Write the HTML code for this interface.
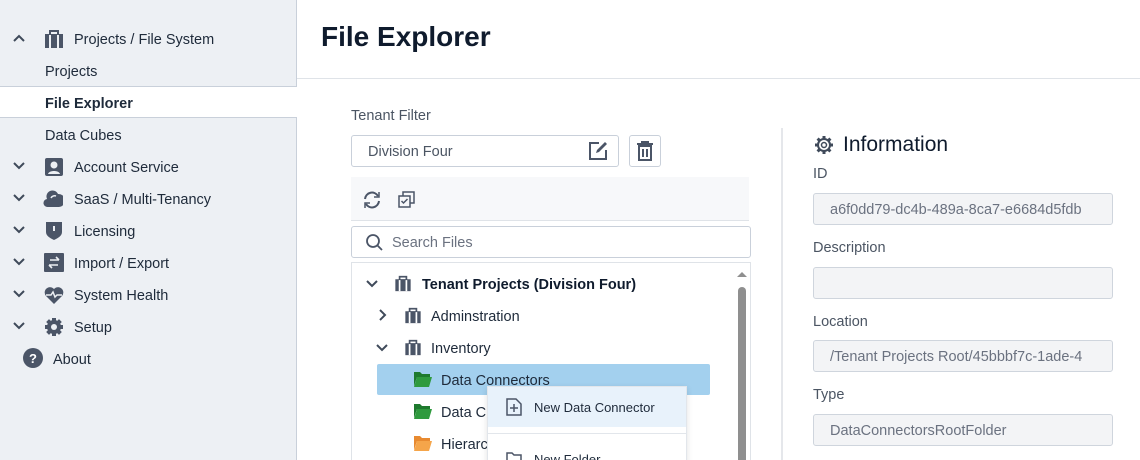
<!DOCTYPE html><html><head><style>
*{margin:0;padding:0;box-sizing:border-box}
html,body{overflow:hidden}
body{width:1140px;height:460px;overflow:hidden;background:#fff;font-family:"Liberation Sans",sans-serif;color:#1f2937;position:relative}
.a{position:absolute}
.sb{left:0;top:0;width:297px;height:460px;background:#edf0f4;border-right:1px solid #c9d0da}
.it{position:absolute;font-size:14.5px;color:#1e2a3a;transform:translateY(1px)}
.ic{position:absolute;width:20px;height:20px}
.lbl{font-size:14.5px;color:#4b5563;transform:translateY(1px)}
.inp{border:1px solid #cfd5dd;border-radius:3px;background:#f3f4f6;height:32px;font-size:14.5px;color:#6b7280;padding:8px 16px;white-space:nowrap;overflow:hidden;line-height:16px}
.t{position:absolute;font-size:14.5px;color:#1e2a3a;transform:translateY(1px)}
</style></head><body>
<div class="a sb"></div>
<div class="a" style="left:0;top:86px;width:297px;height:32px;background:#fff;border-top:1px solid #c9d0da;border-bottom:1px solid #c9d0da"></div>
<svg class="a" style="left:12px;top:33px" width="14" height="10" viewBox="0 0 14 10"><path d="M2 8L7 3L12 8" stroke="#3f4a5a" stroke-width="2" fill="none"/></svg>
<svg class="ic" style="left:44px;top:29px" viewBox="0 0 20 20"><rect x="1" y="5" width="18" height="14" fill="#4b5567"/><rect x="6" y="2" width="8" height="4" fill="none" stroke="#4b5567" stroke-width="2"/><rect x="5" y="6" width="2" height="13" fill="#edf0f4"/><rect x="13" y="6" width="2" height="13" fill="#edf0f4"/></svg>
<div class="it" style="left:74px;top:31px">Projects / File System</div>
<div class="it" style="left:45px;top:63px">Projects</div>
<div class="it" style="left:45px;top:95px;font-weight:bold">File Explorer</div>
<div class="it" style="left:45px;top:127px">Data Cubes</div>
<svg class="a" style="left:12px;top:161px" width="14" height="170"><g stroke="#3f4a5a" stroke-width="2" fill="none"><path d="M2 2L7 7L12 2"/><path d="M2 34L7 39L12 34"/><path d="M2 66L7 71L12 66"/><path d="M2 98L7 103L12 98"/><path d="M2 130L7 135L12 130"/><path d="M2 162L7 167L12 162"/></g></svg>
<svg class="ic" style="left:44px;top:157px" viewBox="0 0 20 20"><rect x="1" y="1" width="18" height="18" rx="2" fill="#4b5567"/><circle cx="10" cy="8" r="3.5" fill="#edf0f4"/><path d="M4 17c1-4 11-4 12 0z" fill="#edf0f4"/></svg>
<div class="it" style="left:74px;top:159px">Account Service</div>
<svg class="ic" style="left:43px;top:189px" viewBox="0 0 20 20"><path d="M5 18a4 4 0 0 1-1-8a6 6 0 0 1 11-5a5 5 0 0 1 1 13z" fill="#4b5567"/><path d="M8 9a4 4 0 0 1 5-2" stroke="#edf0f4" stroke-width="1.5" fill="none"/></svg>
<div class="it" style="left:74px;top:191px">SaaS / Multi-Tenancy</div>
<svg class="ic" style="left:44px;top:220px" viewBox="0 0 20 20"><path d="M2 2h16v10c0 4-4 6-8 8c-4-2-8-4-8-8z" fill="#4b5567"/><rect x="9" y="6" width="2" height="5" fill="#edf0f4"/></svg>
<div class="it" style="left:74px;top:223px">Licensing</div>
<svg class="ic" style="left:44px;top:253px" viewBox="0 0 20 20"><rect x="0" y="0" width="20" height="19" rx="1" fill="#4b5567"/><path d="M6 7h9M12 4l3 3M14 12H5M8 15l-3-3" stroke="#edf0f4" stroke-width="1.6" fill="none"/></svg>
<div class="it" style="left:74px;top:255px">Import / Export</div>
<svg class="ic" style="left:44px;top:285px" viewBox="0 0 20 20"><path d="M10 19L2 11a5 5 0 0 1 8-7a5 5 0 0 1 8 7z" fill="#4b5567"/><path d="M2 10h5l2-3 2 5 2-2h5" stroke="#edf0f4" stroke-width="1.5" fill="none"/></svg>
<div class="it" style="left:74px;top:287px">System Health</div>
<svg class="ic" style="left:44px;top:317px" viewBox="0 0 20 20"><circle cx="10" cy="10" r="7" fill="#4b5567"/><g stroke="#4b5567" stroke-width="4"><path d="M10 1v18M1 10h18M3.6 3.6l12.8 12.8M16.4 3.6L3.6 16.4"/></g><circle cx="10" cy="10" r="3" fill="#edf0f4"/></svg>
<div class="it" style="left:74px;top:319px">Setup</div>
<svg class="ic" style="left:23px;top:348px" viewBox="0 0 20 20"><circle cx="10" cy="10" r="10" fill="#4b5567"/><text x="10" y="15" font-size="13" font-weight="bold" text-anchor="middle" fill="#fff" font-family="Liberation Sans">?</text></svg>
<div class="it" style="left:53px;top:351px">About</div>

<div class="a" style="left:297px;top:78px;width:843px;height:1px;background:#dfe3e8"></div>
<div class="a" style="left:321px;top:21px;font-size:28px;font-weight:bold;color:#0f1b2d">File Explorer</div>

<div class="a lbl" style="left:351px;top:107px">Tenant Filter</div>
<div class="a" style="left:351px;top:135px;width:268px;height:32px;border:1px solid #c9d0da;border-radius:3px;font-size:14.5px;color:#4b5563;padding:8px 16px;line-height:16px">Division Four</div>
<svg class="a" style="left:588px;top:141px" width="20" height="20" viewBox="0 0 20 20"><path d="M11 2H2v16h16V9" stroke="#4b5567" stroke-width="2" fill="none"/><path d="M8 12l1-3 8-8 2 2-8 8z" fill="#4b5567"/></svg>
<div class="a" style="left:629px;top:135px;width:32px;height:32px;border:1px solid #c9d0da;border-radius:3px"></div>
<svg class="a" style="left:636px;top:141px" width="18" height="20" viewBox="0 0 18 20"><path d="M1 3h16M6 3V1h6v2" stroke="#4b5567" stroke-width="2" fill="none"/><rect x="3" y="5" width="12" height="14" stroke="#4b5567" stroke-width="2" fill="none"/><path d="M7 8v8M11 8v8" stroke="#4b5567" stroke-width="2"/></svg>
<div class="a" style="left:351px;top:177px;width:398px;height:44px;background:#f7f8fa;border-bottom:1px solid #dfe3e8"></div>
<svg class="a" style="left:362px;top:190px" width="20" height="20" viewBox="0 0 20 20"><path d="M16 6a7 7 0 0 0-13 3M4 14a7 7 0 0 0 13-3" stroke="#4b5567" stroke-width="2" fill="none"/><path d="M17 2v5h-5M3 18v-5h5" stroke="#4b5567" stroke-width="1.5" fill="none"/></svg>
<svg class="a" style="left:398px;top:191px" width="18" height="18" viewBox="0 0 18 18"><rect x="1" y="5" width="11" height="11" stroke="#4b5567" stroke-width="1.5" fill="none"/><path d="M5 5V1h11v11h-4" stroke="#4b5567" stroke-width="1.5" fill="none"/><path d="M3.5 10l2 2 4-4" stroke="#4b5567" stroke-width="1.5" fill="none"/></svg>
<div class="a" style="left:351px;top:226px;width:400px;height:32px;border:1px solid #c9d0da;border-radius:3px"></div>
<svg class="a" style="left:365px;top:233px" width="18" height="18" viewBox="0 0 18 18"><circle cx="8" cy="8" r="6" stroke="#4b5567" stroke-width="1.8" fill="none"/><path d="M12.5 12.5L17 17" stroke="#4b5567" stroke-width="1.8"/></svg>
<div class="a" style="left:392px;top:235px;font-size:14.5px;color:#6b7280">Search Files</div>
<div class="a" style="left:351px;top:262px;width:400px;height:200px;border:1px solid #dfe3e8;border-bottom:none"></div>
<div class="a" style="left:738px;top:287px;width:8px;height:180px;background:#8f8f8f;border-radius:4px"></div>
<svg class="a" style="left:737px;top:271px" width="10" height="6"><path d="M0 6L5 1L10 6z" fill="#8f8f8f"/></svg>

<svg class="a" style="left:366px;top:279px" width="12" height="10"><path d="M1 2L6 7L11 2" stroke="#3f4a5a" stroke-width="2" fill="none"/></svg>
<svg class="a" style="left:394px;top:275px" width="18" height="17" viewBox="0 0 20 20"><rect x="1" y="5" width="18" height="14" fill="#4b5567"/><rect x="6" y="2" width="8" height="4" fill="none" stroke="#4b5567" stroke-width="2"/><rect x="5" y="6" width="2" height="13" fill="#fff"/><rect x="13" y="6" width="2" height="13" fill="#fff"/></svg>
<div class="t" style="left:422px;top:276px;font-weight:bold;color:#0f1b2d">Tenant Projects (Division Four)</div>
<svg class="a" style="left:378px;top:309px" width="10" height="12"><path d="M2 1L7 6L2 11" stroke="#3f4a5a" stroke-width="2" fill="none"/></svg>
<svg class="a" style="left:404px;top:307px" width="18" height="17" viewBox="0 0 20 20"><rect x="1" y="5" width="18" height="14" fill="#4b5567"/><rect x="6" y="2" width="8" height="4" fill="none" stroke="#4b5567" stroke-width="2"/><rect x="5" y="6" width="2" height="13" fill="#fff"/><rect x="13" y="6" width="2" height="13" fill="#fff"/></svg>
<div class="t" style="left:431px;top:308px">Adminstration</div>
<svg class="a" style="left:376px;top:343px" width="12" height="10"><path d="M1 2L6 7L11 2" stroke="#3f4a5a" stroke-width="2" fill="none"/></svg>
<svg class="a" style="left:404px;top:339px" width="18" height="17" viewBox="0 0 20 20"><rect x="1" y="5" width="18" height="14" fill="#4b5567"/><rect x="6" y="2" width="8" height="4" fill="none" stroke="#4b5567" stroke-width="2"/><rect x="5" y="6" width="2" height="13" fill="#fff"/><rect x="13" y="6" width="2" height="13" fill="#fff"/></svg>
<div class="t" style="left:431px;top:340px">Inventory</div>
<div class="a" style="left:377px;top:364px;width:333px;height:31px;background:#a3d0ee;border-radius:2px"></div>
<svg class="a" style="left:414px;top:371px" width="18" height="16" viewBox="0 0 18 16"><path d="M0 1h6l2 2h8v3H3L0 15z" fill="#1e7a2e"/><path d="M3 6h15l-3 10H0z" fill="#2f9a3e"/></svg>
<div class="t" style="left:441px;top:372px">Data Connectors</div>
<svg class="a" style="left:414px;top:403px" width="18" height="16" viewBox="0 0 18 16"><path d="M0 1h6l2 2h8v3H3L0 15z" fill="#1e7a2e"/><path d="M3 6h15l-3 10H0z" fill="#2f9a3e"/></svg>
<div class="t" style="left:441px;top:404px">Data C</div>
<svg class="a" style="left:414px;top:435px" width="18" height="16" viewBox="0 0 18 16"><path d="M0 1h6l2 2h8v3H3L0 15z" fill="#e88a30"/><path d="M3 6h15l-3 10H0z" fill="#f5a54a"/></svg>
<div class="t" style="left:441px;top:436px">Hierarc</div>

<div class="a" style="left:487px;top:386px;width:200px;height:80px;background:#fff;border:1px solid #e2e6eb;box-shadow:0 2px 6px rgba(0,0,0,.12)"></div>
<div class="a" style="left:488px;top:387px;width:198px;height:40px;background:#e8f2fb"></div>
<div class="a" style="left:488px;top:433px;width:198px;height:1px;background:#e2e6eb"></div>
<svg class="a" style="left:506px;top:398px" width="16" height="18" viewBox="0 0 16 18"><path d="M1 1h9l5 5v11H1z" stroke="#4b5567" stroke-width="1.5" fill="none"/><path d="M8 6v8M4 10h8" stroke="#4b5567" stroke-width="1.5"/></svg>
<div class="a" style="left:534px;top:400px;font-size:13px;color:#1e2a3a">New Data Connector</div>
<div class="a" style="left:534px;top:452px;font-size:13px;color:#1e2a3a">New Folder</div>
<svg class="a" style="left:506px;top:452px" width="16" height="14"><path d="M1 1h5l2 2h7v10H1z" stroke="#4b5567" stroke-width="1.5" fill="none"/></svg>

<div class="a" style="left:781px;top:128px;width:2px;height:332px;background:#e5e7eb"></div>
<svg class="a" style="left:814px;top:135px" width="20" height="20" viewBox="0 0 20 20"><circle cx="10" cy="10" r="6" stroke="#3f4a5a" stroke-width="2" fill="none"/><g stroke="#3f4a5a" stroke-width="3"><path d="M10 1v3M10 16v3M1 10h3M16 10h3M3.6 3.6l2 2M14.4 14.4l2 2M16.4 3.6l-2 2M5.6 14.4l-2 2"/></g><circle cx="10" cy="10" r="2.5" stroke="#3f4a5a" stroke-width="1.5" fill="none"/></svg>
<div class="a" style="left:843px;top:133px;font-size:21px;color:#0f1b2d">Information</div>
<div class="a lbl" style="left:813px;top:165px">ID</div>
<div class="a inp" style="left:813px;top:193px;width:300px">a6f0dd79-dc4b-489a-8ca7-e6684d5fdb</div>
<div class="a lbl" style="left:813px;top:239px">Description</div>
<div class="a inp" style="left:813px;top:267px;width:300px"></div>
<div class="a lbl" style="left:813px;top:313px">Location</div>
<div class="a inp" style="left:813px;top:340px;width:300px">/Tenant Projects Root/45bbbf7c-1ade-4</div>
<div class="a lbl" style="left:813px;top:386px">Type</div>
<div class="a inp" style="left:813px;top:414px;width:300px">DataConnectorsRootFolder</div>
</body></html>
